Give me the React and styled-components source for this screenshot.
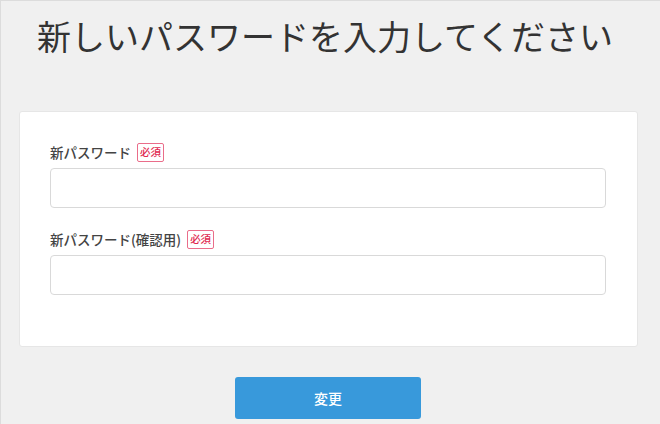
import React from "react";
import styled, { createGlobalStyle } from "styled-components";

const Global = createGlobalStyle`
  html, body { margin: 0; padding: 0; }
  body {
    background: #f0f0f0;
    font-family: "Noto Sans CJK JP", "Noto Sans", sans-serif;
  }
`;

const Page = styled.div`
  box-sizing: border-box;
  width: 660px;
  height: 424px;
  overflow: hidden;
  background: #f0f0f0;
  border-top: 1px solid #dcdcdc;
  border-left: 1px solid #dcdcdc;
  padding: 0 22px 0 18px;
`;

const Title = styled.h1`
  margin: 9px 0 0 18px;
  font-size: 34px;
  line-height: 51px;
  font-weight: 400;
  color: #333;
  letter-spacing: 0;
  white-space: nowrap;
`;

const Card = styled.section`
  box-sizing: border-box;
  margin-top: 50px;
  width: 619px;
  background: #fff;
  border: 1px solid #e6e6e6;
  border-radius: 3px;
  padding: 31px 30px 29px 30px;
`;

const Field = styled.div`
  display: flex;
  flex-direction: column;
  gap: 6px;
  margin-bottom: 22px;
`;

const LabelRow = styled.div`
  display: flex;
  align-items: center;
  gap: 6px;
  height: 19px;
`;

const Label = styled.label`
  font-size: 13.5px;
  font-weight: 500;
  color: #444;
  line-height: 19px;
`;

const Badge = styled.span`
  box-sizing: border-box;
  display: inline-flex;
  align-items: center;
  justify-content: center;
  height: 19px;
  padding: 0 2px;
  border: 1px solid #ea6d8a;
  border-radius: 2px;
  color: #e0284f;
  font-size: 10.5px;
  font-weight: 500;
  line-height: 1;
`;

const Input = styled.input`
  box-sizing: border-box;
  width: 556px;
  height: 40px;
  border: 1px solid #d9d9d9;
  border-radius: 4px;
  background: #fff;
  font-size: 14px;
  padding: 0 10px;
  outline: none;
`;

const Actions = styled.div`
  display: flex;
  padding-left: 216px;
  margin-top: 30px;
`;

const Button = styled.button`
  width: 186px;
  height: 42px;
  border: none;
  border-radius: 3px;
  background: #3899db;
  color: #fff;
  font-family: "Noto Sans CJK JP", sans-serif;
  font-size: 14px;
  font-weight: 500;
  cursor: pointer;
`;

export default function App() {
  return (
    <>
      <Global />
      <Page>
        <Title>新しいパスワードを入力してください</Title>
        <Card>
          <Field>
            <LabelRow>
              <Label>新パスワード</Label>
              <Badge>必須</Badge>
            </LabelRow>
            <Input type="password" />
          </Field>
          <Field>
            <LabelRow>
              <Label>新パスワード(確認用)</Label>
              <Badge>必須</Badge>
            </LabelRow>
            <Input type="password" />
          </Field>
        </Card>
        <Actions>
          <Button>変更</Button>
        </Actions>
      </Page>
    </>
  );
}
